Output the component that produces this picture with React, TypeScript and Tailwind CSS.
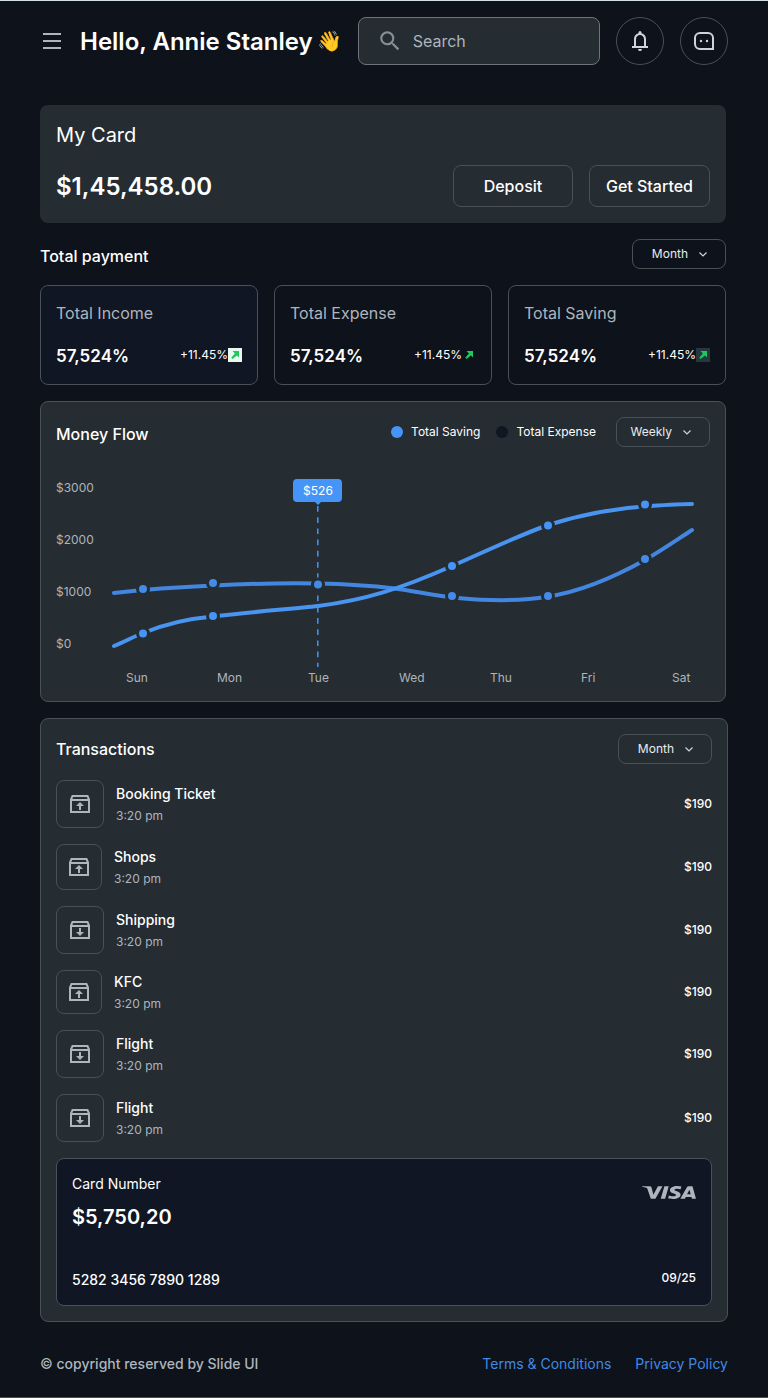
import React from "react";
import { MdSearch } from "react-icons/md";
import { SiVisa } from "react-icons/si";

function MenuIcon() {
  return (
    <svg viewBox="0 0 24 24" className="size-6" fill="currentColor" aria-hidden="true">
      <path d="M3 4h18v2H3zM3 11h18v2H3zM3 18h18v2H3z" />
    </svg>
  );
}

function BellIcon() {
  return (
    <svg viewBox="0 0 24 24" className="size-6" fill="currentColor" aria-hidden="true">
      <path d="M4 19v-2h2v-7q0-2.075 1.25-3.688Q8.5 4.7 10.5 4.2v-.7q0-.625.438-1.063Q11.375 2 12 2t1.062.437q.438.438.438 1.063v.7q2 .5 3.25 2.112Q18 7.925 18 10v7h2v2Zm8 3q-.825 0-1.412-.587Q10 20.825 10 20h4q0 .825-.587 1.413Q12.825 22 12 22Zm-4-5h8v-7q0-1.65-1.175-2.825Q13.65 6 12 6q-1.65 0-2.825 1.175Q8 8.35 8 10Z" />
    </svg>
  );
}

function ChatIcon() {
  return (
    <svg viewBox="0 0 24 24" className="size-6" fill="none" aria-hidden="true">
      <path d="M8 4h8a5 5 0 0 1 5 5v11H8a5 5 0 0 1-5-5V9a5 5 0 0 1 5-5Z" stroke="currentColor" strokeWidth="2" />
      <circle cx="9" cy="12" r="1.2" fill="currentColor" />
      <circle cx="15" cy="12" r="1.2" fill="currentColor" />
    </svg>
  );
}

function ArchiveIcon({ up }: { up: boolean }) {
  return (
    <svg viewBox="0 0 24 24" className="size-6" fill="none" stroke="currentColor" aria-hidden="true">
      <path d="M3 7.500V20h18V7.500L19.500 4H4.500ZM3 8h18" strokeWidth="2" />
      <path d={up ? "M12 18v-4.500" : "M12 10v4.500"} strokeWidth="2" />
      <path d={up ? "M12 10l4 4H8Z" : "M12 18l4-4H8Z"} fill="currentColor" stroke="none" />
    </svg>
  );
}

function TrendIcon({ tone }: { tone: string }) {
  return (
    <span className={`flex size-3.5 items-center justify-center ${tone}`}>
      <svg viewBox="0 0 14 14" className="size-3.5" fill="#22c55e" aria-hidden="true">
        <path d="M4.500 3H11v6.500L8.900 7.400 4.600 11 3.300 9.700 6.900 5.400Z" />
      </svg>
    </span>
  );
}

function PeriodSelect({ label, options }: { label: string; options: string[] }) {
  return (
    <div className="relative">
      <select
        aria-label={label}
        className="block h-[30px] w-[94px] appearance-none rounded-lg border border-[#495057] bg-transparent pr-[37px] text-right text-xs text-[#e9ecef] [text-align-last:right]"
      >
        {options.map((o) => (
          <option key={o}>{o}</option>
        ))}
      </select>
      <svg
        viewBox="0 0 16 16"
        className="pointer-events-none absolute top-[7px] right-[15px] size-4"
        fill="none"
        stroke="#ced4da"
        strokeWidth="1.2"
        aria-hidden="true"
      >
        <path d="M4.500 6.500 8 10l3.500-3.500" />
      </svg>
    </div>
  );
}

const stats = [
  { name: "Total Income", card: "bg-[#101624]", tone: "bg-[#e8f8f0]" },
  { name: "Total Expense", card: "", tone: "" },
  { name: "Total Saving", card: "", tone: "bg-[#253840]" },
];

const savingDots = [[39, 155.500], [109, 138], [348, 88], [444, 47.500], [541, 26.500]];
const expenseDots = [[39, 111], [109, 105], [214, 106.500], [348, 118], [444, 118], [541, 81]];

function Dots({ points, color }: { points: number[][]; color: string }) {
  return (
    <>
      {points.map(([x, y]) => (
        <circle key={x} cx={x} cy={y} r="5.500" fill={color} stroke="#252c32" strokeWidth="3" />
      ))}
    </>
  );
}

function FlowChart() {
  return (
    <svg viewBox="0 0 606 190" className="h-auto min-w-0 flex-1" fill="none" role="img" aria-label="Money flow by day">
      <path d="M213.800 28V189" stroke="#4594f8" strokeWidth="1.500" strokeDasharray="5.700 5.500" />
      <path
        d="M10 115C41 111.500 76 109 109 107.500C146 105.700 186 105 214 105.500C241 106 266 107.500 291 110.500C311 113 331 118 354 120C386 123 416 123.500 444 118.500C481 113 514 97 541 82C558 72 574 61 588 52"
        stroke="#4386df"
        strokeWidth="4"
        strokeLinecap="round"
      />
      <path
        d="M10 168C20 164 29 159 39 155C61 146 86 140.500 109 138.500C146 134 186 131 214 128C261 122 296 111 348 88C380 74 411 59 444 47C476 37 511 30 546 28C561 27 576 26 588 26"
        stroke="#4894f0"
        strokeWidth="4"
        strokeLinecap="round"
      />
      <Dots points={expenseDots} color="#438bea" />
      <Dots points={savingDots} color="#4594f8" />
      <path d="M193 1h41a4 4 0 0 1 4 4v15a4 4 0 0 1-4 4h-17l-3 3-3-3h-18a4 4 0 0 1-4-4V5a4 4 0 0 1 4-4Z" fill="#4594f8" />
      <text x="214" y="17" textAnchor="middle" className="fill-white text-xs">
        $526
      </text>
    </svg>
  );
}

const transactions = [
  { name: "Booking Ticket", up: true, box: "size-12" },
  { name: "Shops", up: true, box: "size-[46px]" },
  { name: "Shipping", up: false, box: "size-12" },
  { name: "KFC", up: true, box: "h-11 w-[46px]" },
  { name: "Flight", up: false, box: "size-12" },
  { name: "Flight", up: false, box: "size-12" },
];

export default function App() {
  return (
    <div className="border-t border-b border-t-[#d5dfe6] border-b-[#495057] bg-[#0d121b] px-10 pt-4 pb-[23px] font-['Inter',sans-serif] text-white">
      <header className="flex items-center gap-4">
        <button aria-label="Menu" className="text-[#adb5bd]">
          <MenuIcon />
        </button>
        <h1 className="flex items-center gap-1 whitespace-nowrap">
          <span className="pt-0.5 text-2xl font-semibold">Hello, Annie Stanley</span>
          <span className="text-xl">👋</span>
        </h1>
        <label className="flex h-12 min-w-0 flex-1 items-center gap-2.5 rounded-lg border border-[#6c757d] bg-[#252c32] pl-[18px]">
          <MdSearch className="size-[26px] shrink-0 text-[#868e96]" aria-hidden="true" />
          <input
            type="search"
            aria-label="Search"
            placeholder="Search"
            className="w-full min-w-0 bg-transparent text-base outline-none placeholder:text-[#adb5bd]"
          />
        </label>
        <button aria-label="Notifications" className="flex size-12 shrink-0 items-center justify-center rounded-full border border-[#495057] text-[#ced4da]">
          <BellIcon />
        </button>
        <button aria-label="Messages" className="flex size-12 shrink-0 items-center justify-center rounded-full border border-[#495057] text-[#ced4da]">
          <ChatIcon />
        </button>
      </header>

      <main className="mt-10 flex flex-col gap-4">
        <section className="mr-0.5 rounded-lg bg-[#252c32] p-4">
          <h2 className="text-xl leading-7">My Card</h2>
          <div className="mt-4 flex items-center gap-4">
            <p className="flex-1 pt-0.5 text-2xl font-semibold">$1,45,458.00</p>
            <button className="h-[42px] w-[120px] rounded-lg border border-[#495057] font-medium">Deposit</button>
            <button className="h-[42px] rounded-lg border border-[#495057] px-4 font-medium">Get Started</button>
          </div>
        </section>

        <section className="mr-0.5">
          <div className="flex items-end justify-between">
            <h2 className="text-base leading-[26px] font-medium">Total payment</h2>
            <PeriodSelect label="Payment period" options={["Month", "Week", "Year"]} />
          </div>
          <div className="mt-4 grid grid-cols-3 gap-4">
            {stats.map((s) => (
              <article key={s.name} className={`rounded-lg border border-[#495057] p-[15px] ${s.card}`}>
                <h3 className="text-base text-[#adb5bd]">{s.name}</h3>
                <div className="mt-4 flex h-7 items-center justify-between">
                  <p className="pt-0.5 text-[17px] leading-7 font-semibold">57,524%</p>
                  <p className="flex items-center text-xs">
                    +11.45%
                    <TrendIcon tone={s.tone} />
                  </p>
                </div>
              </article>
            ))}
          </div>
        </section>

        <section className="mr-0.5 rounded-lg border border-[#495057] bg-[#252c32] px-[15px] pt-[15px] pb-[13px]">
          <div className="flex items-center">
            <h2 className="flex-1 pt-1 text-base font-medium">Money Flow</h2>
            <ul className="mr-5 flex gap-4 text-xs">
              <li className="flex items-center gap-2">
                <span className="size-3 rounded-full bg-[#4594f8]" />
                Total Saving
              </li>
              <li className="flex items-center gap-2">
                <span className="size-3 rounded-full bg-[#101624]" />
                Total Expense
              </li>
            </ul>
            <PeriodSelect label="Chart period" options={["Weekly", "Monthly"]} />
          </div>
          <div className="mt-[31px] flex items-start text-xs leading-5 text-[#adb5bd]">
            <div className="flex w-12 flex-col gap-8">
              <span>$3000</span>
              <span>$2000</span>
              <span>$1000</span>
              <span>$0</span>
            </div>
            <FlowChart />
          </div>
          <div className="mr-[19px] ml-[70px] grid grid-cols-[repeat(6,1fr)_19px] text-xs leading-5 text-[#adb5bd]">
            {["Sun", "Mon", "Tue", "Wed", "Thu", "Fri", "Sat"].map((d) => (
              <span key={d}>{d}</span>
            ))}
          </div>
        </section>

        <section className="rounded-lg border border-[#495057] bg-[#252c32] p-[15px]">
          <div className="flex items-center justify-between">
            <h2 className="text-base font-medium">Transactions</h2>
            <PeriodSelect label="Transactions period" options={["Month", "Week", "Year"]} />
          </div>
          <ul className="mt-4 flex flex-col gap-4">
            {transactions.map((t, i) => (
              <li key={i} className="flex items-center gap-3">
                <span className={`flex shrink-0 items-center justify-center rounded-lg border border-[#495057] text-[#adb5bd] ${t.box}`}>
                  <ArchiveIcon up={t.up} />
                </span>
                <div className="flex-1">
                  <p className="text-sm leading-6 font-medium">{t.name}</p>
                  <p className="text-xs leading-5 text-[#adb5bd]">3:20 pm</p>
                </div>
                <p className="text-xs font-medium">$190</p>
              </li>
            ))}
          </ul>
          <div className="mt-4 rounded-lg border border-[#495057] bg-[#101624] p-[15px]">
            <div className="flex items-start justify-between">
              <div>
                <h3 className="text-sm">Card Number</h3>
                <p className="mt-2 text-xl leading-[30px] font-semibold">$5,750,20</p>
              </div>
              <div className="pt-3">
                <SiVisa
                  title="Visa"
                  viewBox="0 8.100 24 7.800"
                  preserveAspectRatio="none"
                  className="h-[13px] w-[54px] text-[#adb5bd]"
                />
              </div>
            </div>
            <div className="mt-[38px] flex items-start justify-between font-medium">
              <p className="text-sm">5282 3456 7890 1289</p>
              <p className="text-xs">09/25</p>
            </div>
          </div>
        </section>
      </main>

      <footer className="mt-8 flex items-center justify-between text-sm font-medium text-[#adb5bd]">
        <p>© copyright reserved by Slide UI</p>
        <nav className="flex gap-6 font-normal text-[#4189e4]">
          <a href="#terms">Terms &amp; Conditions</a>
          <a href="#privacy">Privacy Policy</a>
        </nav>
      </footer>
    </div>
  );
}
